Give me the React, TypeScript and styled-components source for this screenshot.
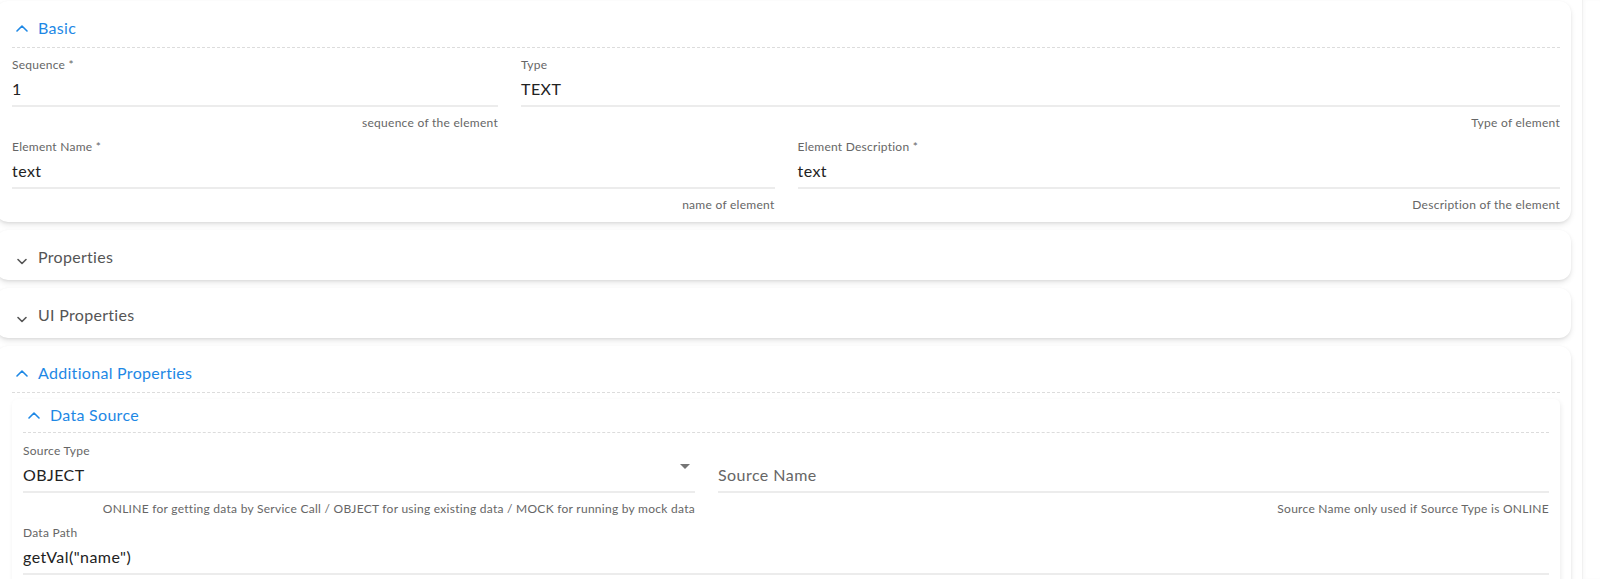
import React from 'react';
import styled, { createGlobalStyle } from 'styled-components';

const GlobalStyle = createGlobalStyle`
  html, body {
    margin: 0;
    padding: 0;
    background: #fff;
    font-family: Lato, "Open Sans", "Liberation Sans", sans-serif;
    overflow: hidden;
  }
`;

const blue = '#1e88e5';

const Page = styled.div`
  display: flex;
  width: 1600px;
  height: 579px;
  overflow: hidden;
`;

const Main = styled.div`
  flex: 1;
`;

const Gutter = styled.div`
  width: 17px;
  border-left: 1px solid #f1f1f1;
  box-shadow: inset 2px 0 3px rgba(0, 0, 0, 0.025);
`;

const Stack = styled.div`
  display: flex;
  flex-direction: column;
  gap: 8px;
  margin: 0 11px 0 -4px;
  padding-top: 1px;
`;

const Card = styled.section<{ inner?: boolean }>`
  background: #fff;
  border-radius: ${({ inner }) => (inner ? '6px' : '12px')};
  box-shadow: ${({ inner }) =>
    inner
      ? '1px 2px 5px rgba(0, 0, 0, 0.08)'
      : '0 3px 6px -1px rgba(0, 0, 0, 0.13), 0 1px 3px rgba(0, 0, 0, 0.05)'};
  padding: ${({ inner }) => (inner ? '0 11px' : '0 11px 0 16px')};
  margin-top: ${({ inner }) => (inner ? '6px' : '0')};
  padding-bottom: ${({ inner }) => (inner ? '0' : '0')};
`;

const Nested = styled.div`
  padding-bottom: 12px;
`;

const Summary = styled.div<{ open: boolean; inner?: boolean }>`
  display: flex;
  align-items: center;
  gap: 10px;
  padding: ${({ open, inner }) =>
    inner ? '5px 0 6px 5px' : open ? '16px 0 8px 4px' : '16px 0 12px 4px'};
  border-bottom: ${({ open }) => (open ? '1px dashed #dcdcdc' : 'none')};
  color: ${({ open }) => (open ? blue : '#555')};
  font-size: 16px;
  line-height: 22px;
  letter-spacing: 0.3px;
`;

const Chevron = styled.svg<{ open: boolean }>`
  width: 12px;
  height: 7px;
  margin-top: ${({ open }) => (open ? '0' : '8px')};
  flex: none;
`;

const Details = styled.div<{ inner?: boolean }>`
  padding: ${({ inner }) => (inner ? '10px 0 12px' : '9px 0 9px')};
  display: flex;
  flex-direction: column;
  gap: 8px;
`;

const Row = styled.div<{ cols: string }>`
  display: grid;
  grid-template-columns: ${({ cols }) => cols};
  column-gap: 23px;
`;

const Field = styled.div`
  display: flex;
  flex-direction: column;
  min-width: 0;
`;

const Label = styled.div`
  font-size: 12px;
  line-height: 16px;
  color: #666;
  margin-bottom: 5px;
  letter-spacing: 0.25px;
`;

const Value = styled.div<{ placeholder?: boolean }>`
  position: relative;
  font-size: 16px;
  line-height: 22px;
  letter-spacing: 0.45px;
  color: ${({ placeholder }) => (placeholder ? '#666' : '#222')};
  padding-bottom: 5px;
  border-bottom: 2px solid #ececec;
  white-space: nowrap;
`;

const Helper = styled.div`
  font-size: 12px;
  line-height: 16px;
  color: #666;
  text-align: right;
  margin-top: 8px;
  letter-spacing: 0.27px;
  white-space: nowrap;
`;

const DropArrow = styled.span`
  position: absolute;
  right: 5px;
  top: 0;
  width: 0;
  height: 0;
  border-left: 5px solid transparent;
  border-right: 5px solid transparent;
  border-top: 5px solid #757575;
`;

function Arrow({ open }: { open: boolean }) {
  return (
    <Chevron open={open} viewBox="0 0 12 7">
      <polyline
        points={open ? '1,6 6,1 11,6' : '2,1.5 6,5.5 10,1.5'}
        fill="none"
        stroke={open ? blue : '#555'}
        strokeWidth="1.6"
        strokeLinecap="round"
        strokeLinejoin="round"
      />
    </Chevron>
  );
}

type FieldProps = {
  label?: string;
  value: string;
  helper?: string;
  placeholder?: boolean;
  select?: boolean;
};

function TextField({ label, value, helper, placeholder, select }: FieldProps) {
  return (
    <Field>
      <Label>{label ?? '\u00a0'}</Label>
      <Value placeholder={placeholder}>
        {value}
        {select && <DropArrow />}
      </Value>
      {helper && <Helper>{helper}</Helper>}
    </Field>
  );
}

export default function App() {
  return (
    <Page>
      <GlobalStyle />
      <Main>
        <Stack>
          <Card>
            <Summary open>
              <Arrow open />
              Basic
            </Summary>
            <Details>
              <Row cols="486fr 1039fr">
                <TextField label="Sequence *" value="1" helper="sequence of the element" />
                <TextField label="Type" value="TEXT" helper="Type of element" />
              </Row>
              <Row cols="1fr 1fr">
                <TextField label="Element Name *" value="text" helper="name of element" />
                <TextField
                  label="Element Description *"
                  value="text"
                  helper="Description of the element"
                />
              </Row>
            </Details>
          </Card>

          <Card>
            <Summary open={false}>
              <Arrow open={false} />
              Properties
            </Summary>
          </Card>

          <Card>
            <Summary open={false}>
              <Arrow open={false} />
              UI Properties
            </Summary>
          </Card>

          <Card>
            <Summary open>
              <Arrow open />
              Additional Properties
            </Summary>
            <Nested>
              <Card inner>
                <Summary open inner>
                  <Arrow open />
                  Data Source
                </Summary>
                <Details inner>
                  <Row cols="672fr 831fr">
                    <TextField
                      label="Source Type"
                      value="OBJECT"
                      select
                      helper="ONLINE for getting data by Service Call / OBJECT for using existing data / MOCK for running by mock data"
                    />
                    <TextField
                      value="Source Name"
                      placeholder
                      helper="Source Name only used if Source Type is ONLINE"
                    />
                  </Row>
                  <Row cols="1fr">
                    <TextField label="Data Path" value={'getVal("name")'} />
                  </Row>
                </Details>
              </Card>
            </Nested>
          </Card>
        </Stack>
      </Main>
      <Gutter />
    </Page>
  );
}
